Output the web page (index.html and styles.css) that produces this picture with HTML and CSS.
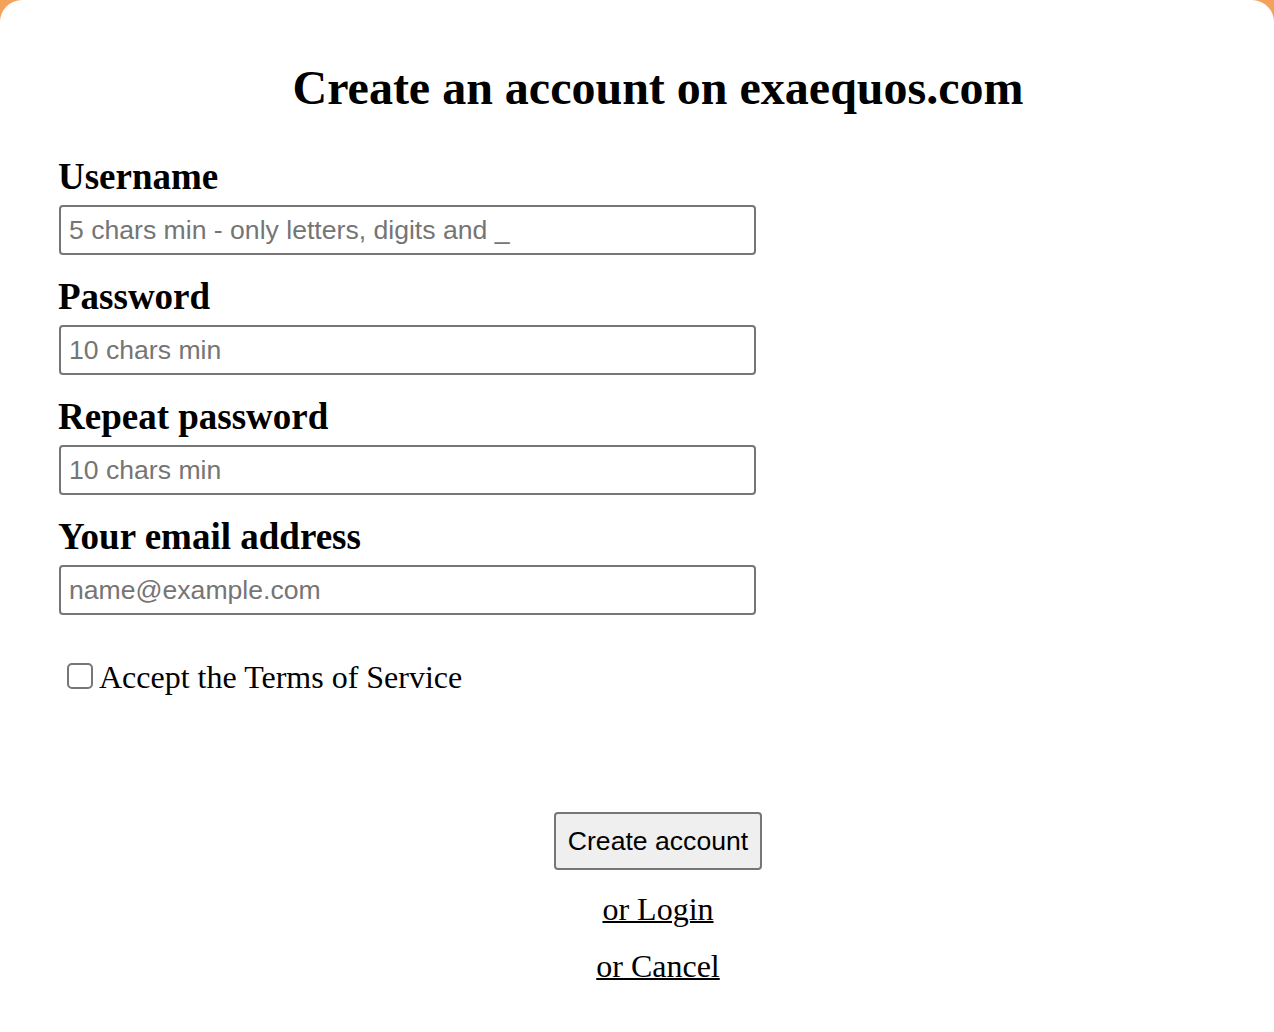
FILE: index.html
```html
<!DOCTYPE html>
<html lang="en">
<head>
<meta charset="utf-8">
<title>Create an account on exaequos.com</title>
<link rel="stylesheet" href="styles.css">
</head>
<body>
<main class="panel">
  <h1 class="title">Create an account on exaequos.com</h1>
  <form class="form">
    <div class="field">
      <label class="label" for="username">Username</label>
      <input class="input" id="username" type="text" placeholder="5 chars min - only letters, digits and _">
    </div>
    <div class="field">
      <label class="label" for="password">Password</label>
      <input class="input" id="password" type="password" placeholder="10 chars min">
    </div>
    <div class="field">
      <label class="label" for="password2">Repeat password</label>
      <input class="input" id="password2" type="password" placeholder="10 chars min">
    </div>
    <div class="field">
      <label class="label" for="email">Your email address</label>
      <input class="input" id="email" type="email" placeholder="name@example.com">
    </div>
    <label class="terms"><input class="check" type="checkbox"><span>Accept the Terms of Service</span></label>
    <div class="actions">
      <button class="btn" type="button">Create account</button>
      <a class="link link-first" href="#">or Login</a>
      <a class="link" href="#">or Cancel</a>
    </div>
  </form>
</main>
</body>
</html>
```
FILE: styles.css
```css
html, body {
  margin: 0;
  padding: 0;
}
body {
  background: #f4a15c;
  font-family: "Liberation Serif", "Times New Roman", serif;
  color: #000;
}
.panel {
  background: #fff;
  border-radius: 22px 22px 0 0;
  min-height: 1032px;
  box-sizing: border-box;
  padding: 60px 0 0 42px;
}
.title {
  margin: 0;
  font-size: 48px;
  line-height: 55px;
  font-weight: bold;
  text-align: center;
}
.form {
  margin: 38px 0 0 0;
  display: flex;
  flex-direction: column;
}
.field {
  display: flex;
  flex-direction: column;
  align-items: flex-start;
  padding-left: 16px;
  margin-bottom: 18px;
}
.label {
  font-size: 37px;
  line-height: 44px;
  font-weight: bold;
  padding-top: 2px;
  margin-bottom: 6px;
}
.input {
  width: 697px;
  margin-left: 1px;
  height: 50px;
  box-sizing: border-box;
  border: 2px solid #767676;
  border-radius: 4px;
  padding: 0 8px;
  font-family: "Liberation Sans", Arial, sans-serif;
  font-size: 26.6px;
  color: #000;
  background: #fff;
  outline: none;
}
.input::placeholder {
  color: #757575;
}
.terms {
  display: flex;
  align-items: center;
  margin: 26px 0 0 25px;
  font-size: 32px;
  line-height: 37px;
  gap: 6px;
}
.check {
  appearance: none;
  -webkit-appearance: none;
  margin: 0;
  width: 26px;
  height: 26px;
  box-sizing: border-box;
  border: 2px solid #767676;
  border-radius: 5px;
  background: #fff;
  flex: none;
  position: relative;
  top: -2px;
}
.actions {
  margin-top: 116px;
  display: flex;
  flex-direction: column;
  align-items: center;
}
.btn {
  height: 58px;
  padding: 0 12px;
  box-sizing: border-box;
  border: 2px solid #767676;
  border-radius: 4px;
  background: #efefef;
  font-family: "Liberation Sans", Arial, sans-serif;
  font-size: 26.6px;
  color: #000;
}
.link {
  font-size: 32px;
  line-height: 37px;
  color: #000;
  text-decoration: underline;
  text-decoration-thickness: 2px;
  margin-top: 20px;
}
.link-first {
  margin-top: 21px;
}
```
